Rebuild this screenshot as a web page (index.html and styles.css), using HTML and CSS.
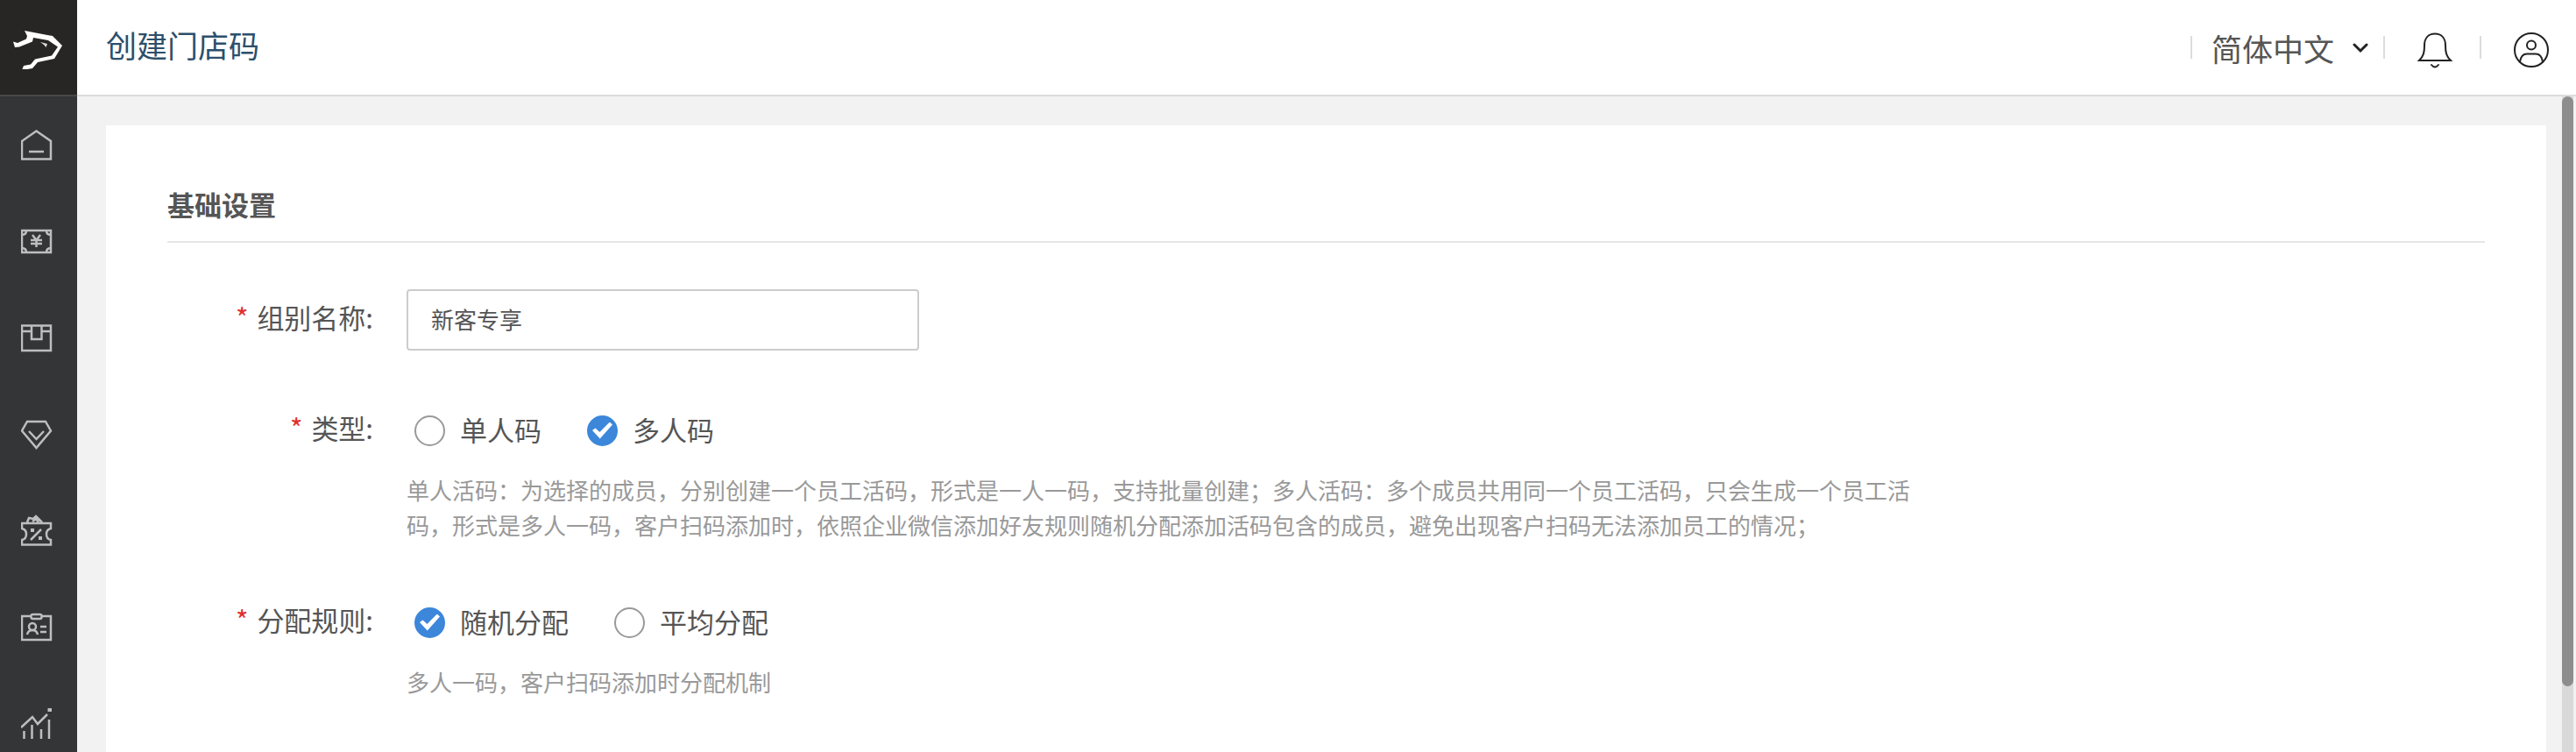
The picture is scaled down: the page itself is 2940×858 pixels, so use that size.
FILE: index.html
```html
<!DOCTYPE html>
<html lang="zh-CN">
<head>
<meta charset="utf-8">
<title>创建门店码</title>
<link rel="stylesheet" href="styles.css">
</head>
<body>
<div class="app">
  <aside class="sidebar">
    <a class="logo" href="#" aria-label="首页">
      <svg width="60" height="50" viewBox="0 0 60 50"><path d="M1 18.500L3 25L8 24.500L23 18.500L24 14L41 17L52 24.500L45 34.500L26 38.500L21 44.500L13 46L11 51L23 49L29 42L48 38L57 23L46 12L40 11L14 6L17 12L16 15.500L6 20Z" fill="#fff"/><path d="M32 19L40 21L38.500 25L36 22Z" fill="#ddd"/></svg>
    </a>
    <nav class="menu">
      <a class="menu-item" href="#" aria-label="主页"><svg class="menu-icon" viewBox="0 0 36 36"><path d="M1 34.500V14L17.500 2.500L34 14V34.500Z"/><path d="M9 26H26"/></svg></a>
      <a class="menu-item" href="#" aria-label="资金"><svg class="menu-icon" viewBox="0 0 36 36"><path d="M1 6H34V31H1ZM1 11Q6 11 6 6M29 6Q29 11 34 11M34 26Q29 26 29 31M6 31Q6 26 1 26M13 11L17.500 17L22 11M17.500 17V25M11 17H24M11 21H24"/></svg></a>
      <a class="menu-item" href="#" aria-label="商品"><svg class="menu-icon" viewBox="0 0 36 36"><path d="M1 4.500H34V33H1ZM12 4.500V20H23.500V4.500M1 11H12M23.500 11H34"/></svg></a>
      <a class="menu-item" href="#" aria-label="会员"><svg class="menu-icon" viewBox="0 0 36 36"><path d="M7 4H28L34 14.500L17.500 34L1 14.500ZM9 15L17.500 24L26 15"/></svg></a>
      <a class="menu-item" href="#" aria-label="优惠券"><svg class="menu-icon" viewBox="0 0 36 36"><path d="M1 10H34V16Q29 17 29 22.500Q29 28 34 29V34.500H1V29Q6 28 6 22.500Q6 17 1 16ZM7 9L9 4L14 5L17 2L20 5L24 9M13 8L17 5L20 9M11 29L23 17"/><path class="solid" d="M11 16H15V20H11ZM20 25H24V29H20Z"/></svg></a>
      <a class="menu-item" href="#" aria-label="员工"><svg class="menu-icon" viewBox="0 0 36 36"><path d="M11 6H1V33H34V6H24"/><rect x="11.500" y="4" width="12" height="5" rx="2"/><circle cx="13" cy="18" r="4"/><path d="M7 27Q8 22 13 22Q18 22 19 27M22 18H29M22 24H29"/></svg></a>
      <a class="menu-item" href="#" aria-label="数据"><svg class="menu-icon" viewBox="0 0 36 36"><path d="M0 23L13 11L19 19L30 8M3.500 27V36M12.500 20V36M23 25V36M32 14V36"/><path class="solid" d="M30.500 1H35V5H30.500Z"/></svg></a>
    </nav>
  </aside>
  <div class="main">
    <header class="topbar">
      <h1 class="page-title">创建门店码</h1>
      <div class="tools">
        <button class="tool language" type="button">简体中文<svg class="chevron" width="18" height="14" viewBox="0 0 18 14"><path d="M2 4L9 11L16 4"/></svg></button>
        <button class="tool" type="button" aria-label="通知"><svg class="tool-icon" width="42" height="42" viewBox="0 0 42 42"><path d="M3 33C8 28 9 24 9 16C9 7 14 2.500 21 2.500S33 7 33 16C33 24 34 28 39 33ZM17 38Q21 43 25 38"/></svg></button>
        <button class="tool" type="button" aria-label="账户"><svg class="tool-icon" width="42" height="42" viewBox="0 0 42 42"><circle cx="21" cy="21" r="19"/><circle cx="21" cy="15.500" r="5"/><path d="M8 34.500C9 28 12 25.500 16 25.500H26C30 25.500 33 28 34 34.500"/></svg></button>
      </div>
    </header>
    <div class="viewport">
      <main class="content">
        <form class="card">
          <h2 class="section-title">基础设置</h2>
          <div class="row">
            <label class="label" for="name"><span class="star">*</span>组别名称:</label>
            <input class="text-input" id="name" type="text" value="新客专享">
          </div>
          <div class="row" role="radiogroup" aria-labelledby="type-label">
            <span class="label" id="type-label"><span class="star">*</span>类型:</span>
            <div class="field">
              <div class="options">
                <label class="option"><input class="radio" type="radio" name="type"><span class="option-text">单人码</span></label>
                <label class="option"><input class="radio" type="radio" name="type" checked><span class="option-text">多人码</span></label>
              </div>
              <p class="hint">单人活码：为选择的成员，分别创建一个员工活码，形式是一人一码，支持批量创建；多人活码：多个成员共用同一个员工活码，只会生成一个员工活码，形式是多人一码，客户扫码添加时，依照企业微信添加好友规则随机分配添加活码包含的成员，避免出现客户扫码无法添加员工的情况；</p>
            </div>
          </div>
          <div class="row" role="radiogroup" aria-labelledby="rule-label">
            <span class="label" id="rule-label"><span class="star">*</span>分配规则:</span>
            <div class="field">
              <div class="options">
                <label class="option"><input class="radio" type="radio" name="rule" checked><span class="option-text">随机分配</span></label>
                <label class="option"><input class="radio" type="radio" name="rule"><span class="option-text">平均分配</span></label>
              </div>
              <p class="hint">多人一码，客户扫码添加时分配机制</p>
            </div>
          </div>
        </form>
      </main>
      <div class="scroll-track"><div class="scroll-thumb"></div></div>
    </div>
  </div>
</div>
</body>
</html>
```
FILE: styles.css
```css
* { box-sizing: border-box; }

body {
  margin: 0;
  color: #555;
  font-family: "Noto Sans CJK SC", sans-serif;
}

h1, h2, p { margin: 0; }

button, input { font: inherit; color: inherit; }

.app {
  display: flex;
  height: 100vh;
  overflow: hidden;
}

/* Sidebar */
.sidebar {
  flex: none;
  width: 88px;
  background: #343537;
}

.logo {
  display: flex;
  align-items: center;
  height: 110px;
  padding-left: 14px;
  background: #282624;
  border-bottom: 2px solid #4a4846;
}

.menu-item {
  display: flex;
  align-items: center;
  height: 110px;
  padding-left: 24px;
}

.menu-icon {
  width: 36px;
  height: 36px;
  fill: none;
  stroke: #bdbebe;
  stroke-width: 2.5;
}

.menu-icon .solid {
  fill: #bdbebe;
  stroke: none;
}

/* Top bar */
.main {
  display: flex;
  flex: 1;
  flex-direction: column;
  min-width: 0;
}

.topbar {
  display: flex;
  flex: none;
  align-items: center;
  justify-content: space-between;
  height: 110px;
  padding-left: 33px;
  border-bottom: 2px solid #dcdcdc;
}

.page-title {
  padding-bottom: 6px;
  color: #2d4f6b;
  font-size: 35px;
  font-weight: 400;
  line-height: 52px;
}

.tools {
  display: flex;
  align-items: center;
}

.tool {
  position: relative;
  display: flex;
  align-items: center;
  justify-content: center;
  width: 110px;
  height: 52px;
  padding: 6px 0 0 8px;
  background: none;
  border: 0;
}

.tool::before {
  position: absolute;
  top: 13px;
  left: 0;
  width: 2px;
  height: 26px;
  background: #dcdcdc;
  content: "";
}

.language {
  gap: 21px;
  justify-content: flex-start;
  width: 220px;
  padding: 0 0 0 24px;
  font-size: 35px;
}

.chevron, .tool-icon {
  fill: none;
  stroke: #222;
  stroke-width: 2;
  stroke-linecap: round;
}

.chevron { stroke-width: 3; }

/* Page body */
.viewport {
  display: flex;
  flex: 1;
  min-height: 0;
  background: #f2f2f2;
}

.content {
  flex: 1;
  min-width: 0;
  padding: 33px 18px 0 33px;
}

.card {
  min-height: 100%;
  padding: 68px 70px;
  background: #fff;
}

.section-title {
  margin-bottom: 53px;
  padding-bottom: 20px;
  border-bottom: 2px solid #e6e6e6;
  font-size: 31px;
  font-weight: 700;
  line-height: 44px;
}

.row {
  display: flex;
  gap: 38px;
  align-items: flex-start;
  margin-bottom: 56px;
}

.label {
  display: flex;
  flex: none;
  gap: 10px;
  align-items: center;
  justify-content: flex-end;
  width: 235px;
  height: 62px;
  font-size: 31px;
}

.star {
  color: #e03030;
  font-size: 31px;
}

.text-input {
  width: 585px;
  height: 70px;
  padding: 0 26px 4px;
  background: #fff;
  border: 2px solid #ccc;
  border-radius: 4px;
  font-size: 26px;
}

.field {
  flex: 1;
  max-width: 1740px;
}

.options {
  display: flex;
  gap: 52px;
  height: 70px;
  padding-left: 9px;
}

.option {
  display: flex;
  gap: 17px;
  align-items: center;
  font-size: 31px;
}

.option-text { padding-bottom: 4px; }

.radio {
  width: 35px;
  height: 35px;
  margin: 0;
  background: #fff;
  border: 2px solid #999;
  border-radius: 50%;
  appearance: none;
}

.radio:checked {
  display: grid;
  place-items: center;
  background: #3c87da;
  border-color: #3c87da;
}

.radio:checked::before {
  width: 23px;
  height: 19px;
  background: #fff;
  clip-path: polygon(0 50%, 15% 37%, 37% 60%, 86% 0, 100% 16%, 38% 100%);
  content: "";
}

.hint {
  padding-top: 13px;
  color: #999;
  font-size: 26px;
  line-height: 40px;
}

/* Scroll bar */
.scroll-track {
  flex: none;
  width: 13px;
  margin-right: 3px;
  background: #d9d9d9;
}

.scroll-thumb {
  height: 90%;
  background: #8d8d8d;
  border-radius: 7px;
}
```
